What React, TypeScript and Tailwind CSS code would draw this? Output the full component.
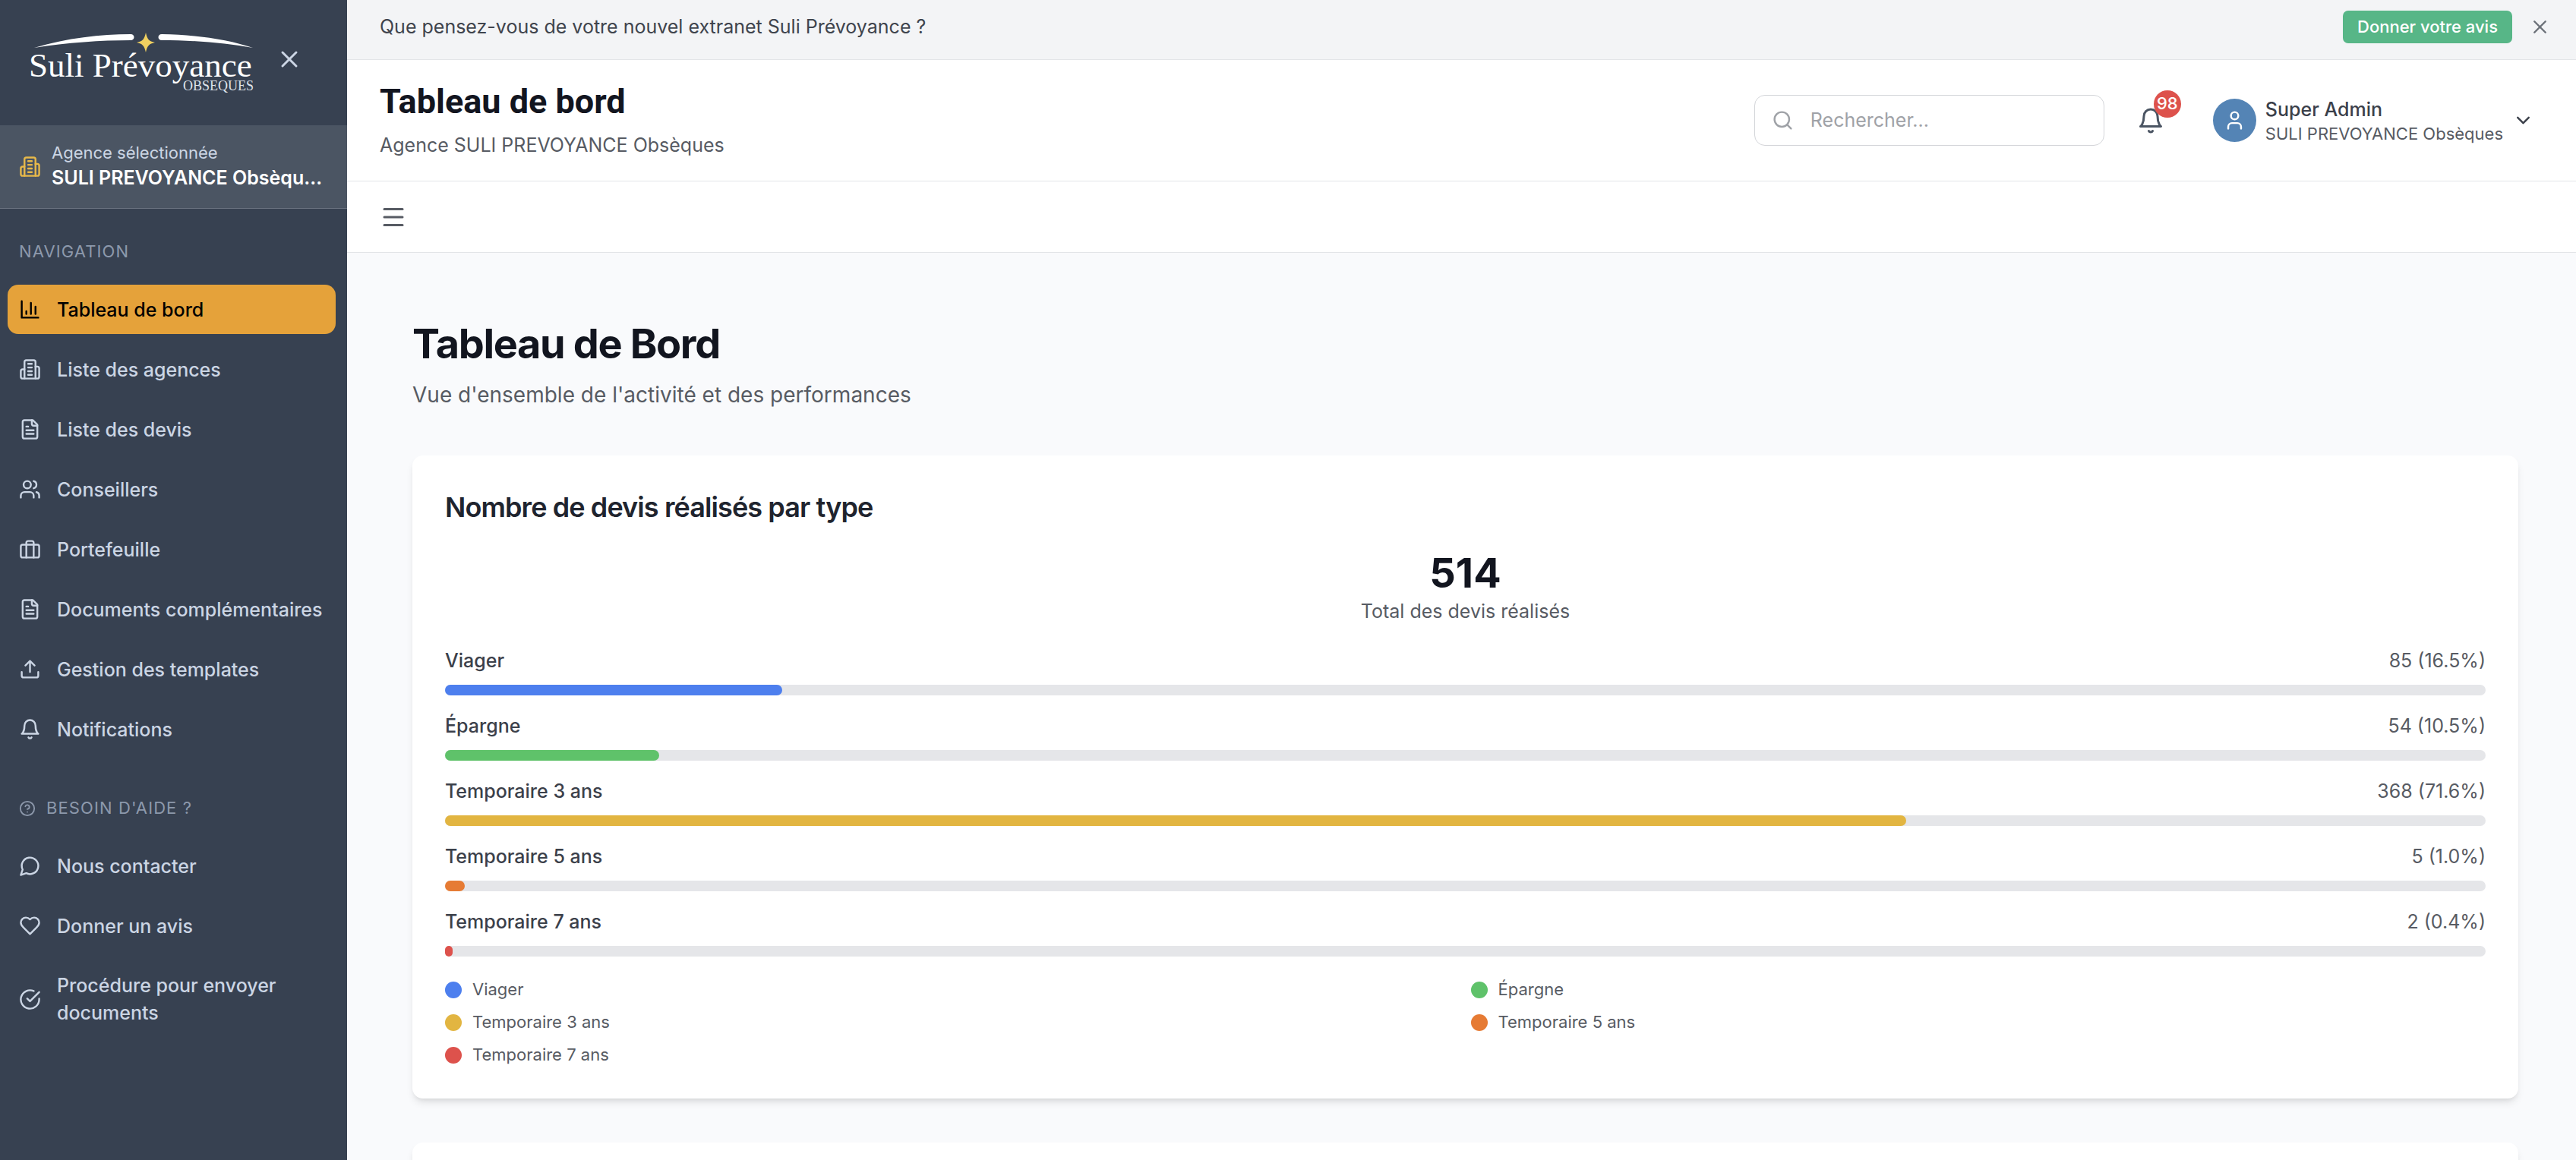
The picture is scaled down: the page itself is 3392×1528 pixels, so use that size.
import React, { useState } from "react";
import { ChevronDown, Menu, Search, User, X } from "lucide-react";

const STATS = [
  { label: "Viager", count: 85, percent: 16.5, color: "bg-[#4d7fee]" },
  { label: "Épargne", count: 54, percent: 10.5, color: "bg-[#5fc26a]" },
  { label: "Temporaire 3 ans", count: 368, percent: 71.6, color: "bg-[#e2b541]" },
  { label: "Temporaire 5 ans", count: 5, percent: 1.0, color: "bg-[#e67b34]" },
  { label: "Temporaire 7 ans", count: 2, percent: 0.4, color: "bg-[#dd524c]" },
];

const total = STATS.reduce((sum, s) => sum + s.count, 0);

function Icon({ className, children }: { className?: string; children: React.ReactNode }) {
  return (
    <svg
      viewBox="0 0 24 24"
      fill="none"
      stroke="currentColor"
      strokeWidth={2}
      strokeLinecap="round"
      strokeLinejoin="round"
      aria-hidden="true"
      className={className ?? "size-[29px] shrink-0"}
    >
      {children}
    </svg>
  );
}

const buildingPaths = (
  <>
    <path d="M6 22V4a2 2 0 0 1 2-2h8a2 2 0 0 1 2 2v18Z" />
    <path d="M6 12H4a2 2 0 0 0-2 2v6a2 2 0 0 0 2 2h2" />
    <path d="M18 9h2a2 2 0 0 1 2 2v9a2 2 0 0 1-2 2h-2" />
    <path d="M10 6h4M10 10h4M10 14h4M10 18h4" />
  </>
);

const filePaths = (
  <>
    <path d="M15 2H6a2 2 0 0 0-2 2v16a2 2 0 0 0 2 2h12a2 2 0 0 0 2-2V7Z" />
    <path d="M14 2v4a2 2 0 0 0 2 2h4" />
    <path d="M10 9H8M16 13H8M16 17H8" />
  </>
);

const bellPaths = (
  <>
    <path d="M6 8a6 6 0 0 1 12 0c0 7 3 9 3 9H3s3-2 3-9" />
    <path d="M10.3 21a1.94 1.94 0 0 0 3.4 0" />
  </>
);

const NAV_ITEMS = [
  { label: "Tableau de bord", icon: <path d="M3 3v18h18M18 17V9M13 17V5M8 17v-3" /> },
  { label: "Liste des agences", icon: buildingPaths },
  { label: "Liste des devis", icon: filePaths },
  {
    label: "Conseillers",
    icon: (
      <>
        <path d="M16 21v-2a4 4 0 0 0-4-4H6a4 4 0 0 0-4 4v2" />
        <circle cx="9" cy="7" r="4" />
        <path d="M22 21v-2a4 4 0 0 0-3-3.87M16 3.13a4 4 0 0 1 0 7.75" />
      </>
    ),
  },
  {
    label: "Portefeuille",
    icon: (
      <>
        <rect width="20" height="14" x="2" y="7" rx="2" />
        <path d="M16 21V5a2 2 0 0 0-2-2h-4a2 2 0 0 0-2 2v16" />
      </>
    ),
  },
  { label: "Documents complémentaires", icon: filePaths },
  {
    label: "Gestion des templates",
    icon: <path d="M21 15v4a2 2 0 0 1-2 2H5a2 2 0 0 1-2-2v-4M17 8l-5-5-5 5M12 3v12" />,
  },
  { label: "Notifications", icon: bellPaths },
];

const HELP_ITEMS = [
  { label: "Nous contacter", icon: <path d="M7.9 20A9 9 0 1 0 4 16.1L2 22Z" /> },
  {
    label: "Donner un avis",
    icon: (
      <path d="M19 14c1.49-1.46 3-3.21 3-5.5A5.5 5.5 0 0 0 16.5 3c-1.76 0-3 .5-4.5 2-1.5-1.5-2.74-2-4.5-2A5.5 5.5 0 0 0 2 8.5c0 2.3 1.5 4.05 3 5.5l7 7Z" />
    ),
  },
  {
    label: "Procédure pour envoyer documents",
    icon: <path d="M22 11.08V12a10 10 0 1 1-5.93-9.14M9 11l3 3L22 4" />,
  },
];

function Logo() {
  return (
    <svg viewBox="0 0 300 86" role="img" aria-label="Suli Prévoyance Obsèques" className="h-[86px] w-[300px]">
      <path d="M7 23C50 10 95 5 134 5c6 0 6 8 0 8C95 13 50 16 7 23Z" fill="#fff" />
      <path d="M295 23C262 12 222 6 175 5c-6 0-6 8 0 8 46 0 86 4 120 10Z" fill="#fff" />
      <path d="M154 3c2 9 4 11 12 13c-8 2-10 4-12 13c-2-9-4-11-12-13c8-2 10-4 12-13Z" fill="#f0d060" />
      <text x="0" y="61" fill="#fff" className="font-['Liberation_Serif',serif] text-[45px]">
        Suli Prévoyance
      </text>
      <text x="296" y="79" textAnchor="end" fill="#dfe4ec" className="font-['Liberation_Serif',serif] text-[18px]">
        OBSEQUES
      </text>
    </svg>
  );
}

function NavLink({
  label,
  icon,
  active,
  onClick,
}: {
  label: string;
  icon: React.ReactNode;
  active?: boolean;
  onClick?: () => void;
}) {
  return (
    <a
      href="#"
      onClick={onClick}
      className={`flex min-h-[65px] items-center gap-[21px] rounded-[14px] px-[15px] py-[14px] text-[25px] leading-[36px] font-medium ${
        active ? "bg-[#e5a23a] text-black" : "text-[#cbd5e4]"
      }`}
    >
      <Icon>{icon}</Icon>
      <span>{label}</span>
    </a>
  );
}

function Sidebar() {
  const [current, setCurrent] = useState("Tableau de bord");

  return (
    <aside className="flex w-[457px] shrink-0 flex-col bg-[#374151]">
      <div className="flex h-[165px] items-start gap-[25px] pt-[40px] pl-[38px]">
        <Logo />
        <button aria-label="Fermer le menu" className="mt-[20px] text-[#cbd5e4]">
          <X className="size-[36px]" />
        </button>
      </div>

      <div className="flex items-center gap-[14px] border-b border-[#6b7280] bg-[#4b5563] py-[22px] pr-[32px] pl-[25px]">
        <Icon className="size-[29px] shrink-0 text-[#e6b84a]">{buildingPaths}</Icon>
        <div className="min-w-0">
          <p className="text-[22px] leading-[29px] text-[#cbd5e4]">Agence sélectionnée</p>
          <p className="truncate text-[25px] leading-[36px] font-semibold text-white">
            SULI PREVOYANCE Obsèques
          </p>
        </div>
      </div>

      <nav className="pt-[42px] pr-[15px] pl-[10px]">
        <h2 className="mb-[29px] px-[15px] text-[22px] leading-[29px] tracking-wider text-[#8d99ac]">
          NAVIGATION
        </h2>
        <div className="flex flex-col gap-[14px]">
          {NAV_ITEMS.map((item) => (
            <NavLink
              key={item.label}
              {...item}
              active={item.label === current}
              onClick={() => setCurrent(item.label)}
            />
          ))}
        </div>

        <h2 className="mt-[57px] mb-[29px] flex items-center gap-[14px] px-[15px] text-[22px] leading-[29px] tracking-wider text-[#8d99ac]">
          <Icon className="size-[22px]">
            <circle cx="12" cy="12" r="10" />
            <path d="M9.09 9a3 3 0 0 1 5.83 1c0 2-3 3-3 3M12 17h.01" />
          </Icon>
          BESOIN D'AIDE ?
        </h2>
        <div className="flex flex-col gap-[14px]">
          {HELP_ITEMS.map((item) => (
            <NavLink key={item.label} {...item} />
          ))}
        </div>
      </nav>
    </aside>
  );
}

function FeedbackBanner() {
  return (
    <div className="flex items-start justify-between border-b border-[#e3e5e8] bg-[#f3f4f6] pt-[14px] pr-[33px] pb-[21px] pl-[43px]">
      <p className="py-[3px] text-[25px] leading-[36px] text-[#3f444d]">
        Que pensez-vous de votre nouvel extranet Suli Prévoyance ?
      </p>
      <div className="flex items-center gap-[22px]">
        <button className="rounded-[7px] bg-[#57b687] px-[19px] py-[7px] text-[22px] leading-[29px] font-medium text-white">
          Donner votre avis
        </button>
        <button aria-label="Fermer" className="text-[#6b7078]">
          <X className="size-[29px]" />
        </button>
      </div>
    </div>
  );
}

function Header() {
  return (
    <header className="flex h-[160px] items-center justify-between border-b border-[#e3e5e8] bg-white px-[43px]">
      <div>
        <h1 className="font-[Roboto,sans-serif] text-[45px] leading-[50px] font-bold text-[#12151f]">
          Tableau de bord
        </h1>
        <p className="mt-[14px] text-[25px] leading-[36px] text-[#575b63]">Agence SULI PREVOYANCE Obsèques</p>
      </div>

      <div className="flex items-center">
        <label className="flex h-[67px] w-[461px] items-center gap-[22px] rounded-[14px] border border-[#d3d5d9] px-[22px]">
          <Search className="size-[29px] shrink-0 text-[#9fa2a7]" />
          <input
            type="search"
            aria-label="Rechercher"
            placeholder="Rechercher..."
            className="w-full min-w-0 text-[25px] outline-none placeholder:text-[#9fa2a7]"
          />
        </label>

        <button aria-label="Notifications" className="relative mr-[52px] ml-[43px] text-[#4b5563]">
          <Icon className="size-[36px]">{bellPaths}</Icon>
          <span className="absolute -top-[22px] left-[22px] flex size-[36px] items-center justify-center rounded-full bg-[#dd524c] text-[22px] font-medium text-white">
            98
          </span>
        </button>

        <button className="flex items-center gap-3 px-3 text-left">
          <span className="flex size-[57px] items-center justify-center rounded-full bg-[#5484b5] text-white">
            <User className="size-[29px]" />
          </span>
          <span>
            <span className="block text-[25px] leading-[36px] font-medium text-[#3b404a]">Super Admin</span>
            <span className="block text-[22px] leading-[29px] text-[#575b63]">SULI PREVOYANCE Obsèques</span>
          </span>
          <ChevronDown className="size-[29px] text-[#3b404a]" />
        </button>
      </div>
    </header>
  );
}

function StatRow({ label, count, percent, color }: (typeof STATS)[number]) {
  return (
    <div>
      <div className="flex justify-between text-[25px] leading-[36px]">
        <span className="font-medium text-[#3b404a]">{label}</span>
        <span className="text-[#575b63]">
          {count} ({percent.toFixed(1)}%)
        </span>
      </div>
      <div className="mt-[14px] h-[14px] rounded-full bg-[#e5e6e9]">
        <div className={`h-full rounded-full ${color}`} style={{ width: `${(count / total) * 100}%` }} />
      </div>
    </div>
  );
}

function QuotesCard() {
  return (
    <section className="rounded-[14px] bg-white p-[43px] shadow-[0_7px_11px_-2px_rgba(0,0,0,0.1),0_4px_7px_-4px_rgba(0,0,0,0.1)]">
      <h3 className="text-[36px] leading-[50px] font-semibold tracking-tight text-[#20242e]">
        Nombre de devis réalisés par type
      </h3>
      <div className="mt-[29px] text-center">
        <div className="text-[54px] leading-[65px] font-bold text-[#12151f]">{total}</div>
        <div className="text-[25px] leading-[36px] text-[#575b63]">Total des devis réalisés</div>
      </div>

      <div className="mt-[29px] flex flex-col gap-[22px]">
        {STATS.map((stat) => (
          <StatRow key={stat.label} {...stat} />
        ))}
      </div>

      <ul className="mt-[29px] grid grid-cols-2 gap-[14px]">
        {STATS.map((stat) => (
          <li key={stat.label} className="flex items-center gap-[14px] text-[22px] leading-[29px] text-[#575b63]">
            <span className={`size-[22px] rounded-full ${stat.color}`} />
            {stat.label}
          </li>
        ))}
      </ul>
    </section>
  );
}

export default function App() {
  return (
    <div className="flex h-screen overflow-hidden bg-[#f9fafc] font-[Inter,sans-serif]">
      <Sidebar />
      <div className="flex min-w-0 flex-1 flex-col">
        <FeedbackBanner />
        <Header />
        <div className="flex h-[94px] shrink-0 items-center border-b border-[#e3e5e8] bg-white px-[43px]">
          <button aria-label="Ouvrir le menu" className="text-[#575b63]">
            <Menu className="size-[36px]" />
          </button>
        </div>

        <main className="min-h-0 flex-1 overflow-hidden pt-[87px] pr-[76px] pl-[86px]">
          <h2 className="text-[54px] leading-[65px] font-bold tracking-tight text-[#12151f]">Tableau de Bord</h2>
          <p className="mt-[14px] text-[28px] leading-[43px] text-[#575b63]">
            Vue d'ensemble de l'activité et des performances
          </p>
          <div className="mt-[58px] flex flex-col gap-[58px]">
            <QuotesCard />
            <section className="h-[400px] rounded-[14px] bg-white shadow-[0_7px_11px_-2px_rgba(0,0,0,0.1),0_4px_7px_-4px_rgba(0,0,0,0.1)]" />
          </div>
        </main>
      </div>
    </div>
  );
}
